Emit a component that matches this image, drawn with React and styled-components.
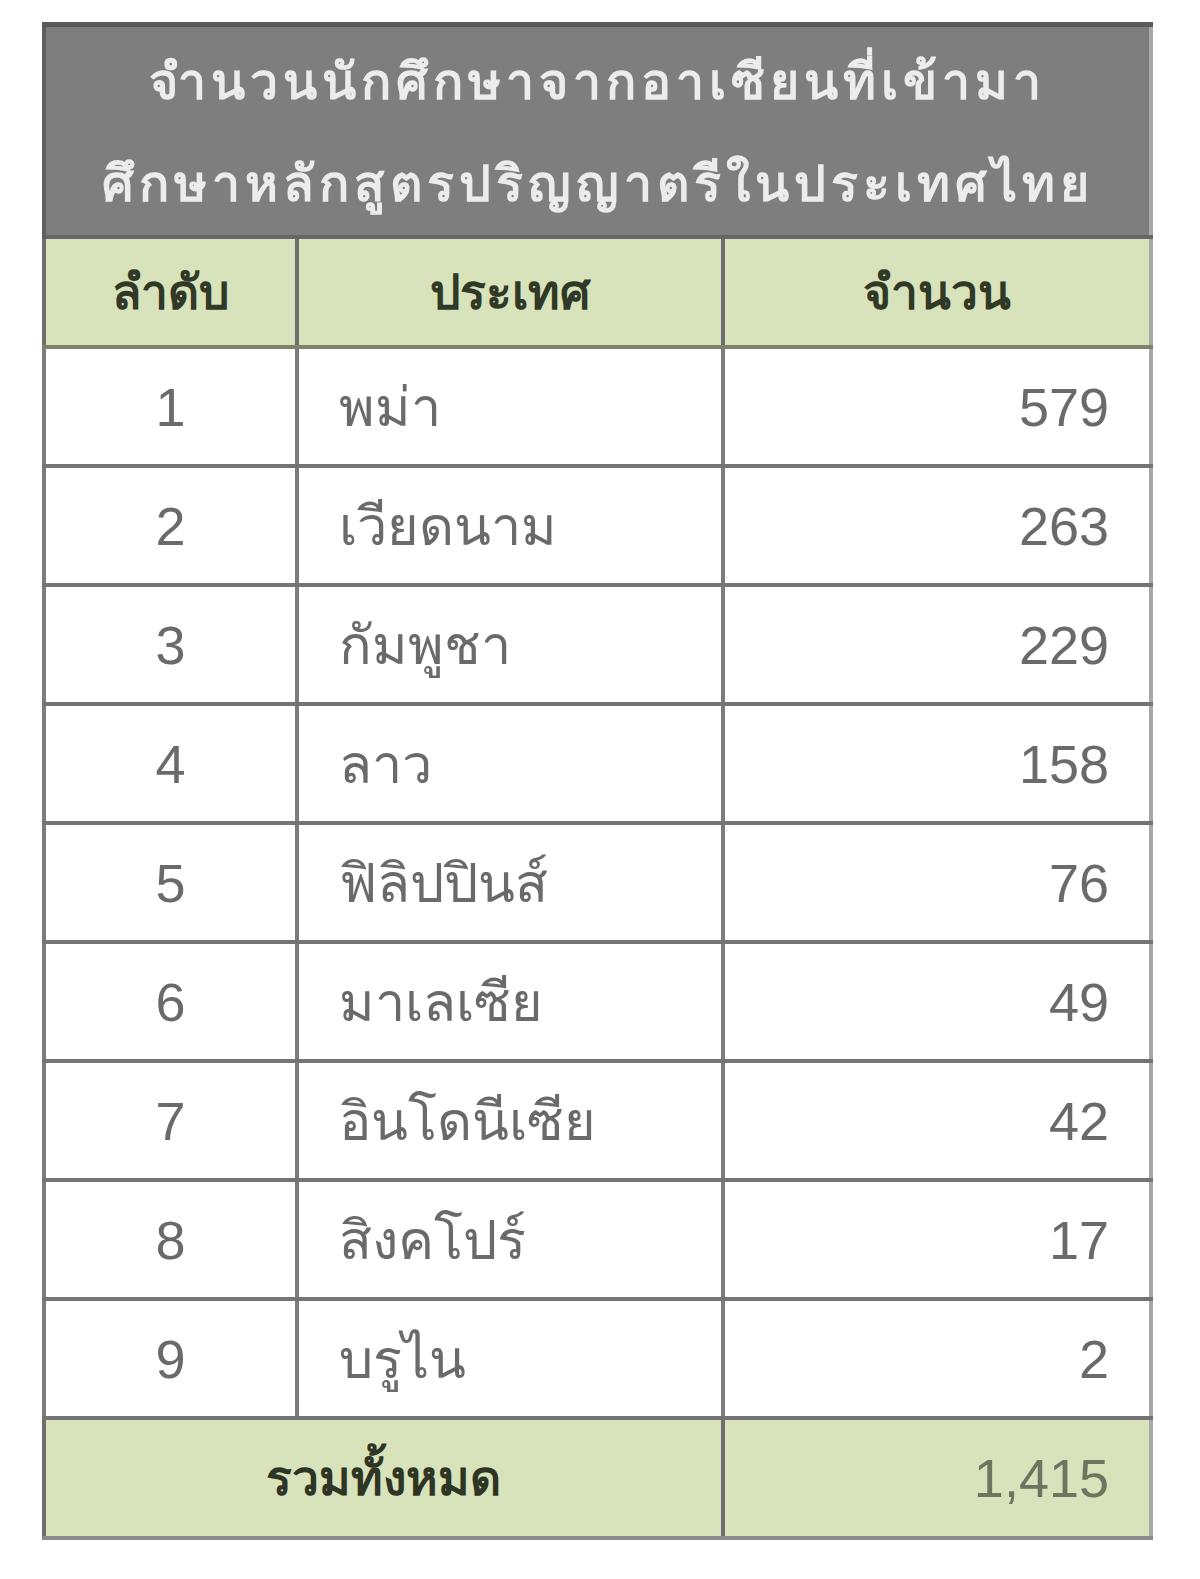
import styled, { createGlobalStyle } from "styled-components";

const GlobalStyle = createGlobalStyle`
  body {
    margin: 0;
    background: #ffffff;
    font-family: "Noto Sans", "DejaVu Sans", sans-serif;
  }
`;

const rows = [
  { no: 1, country: "พม่า", count: "579" },
  { no: 2, country: "เวียดนาม", count: "263" },
  { no: 3, country: "กัมพูชา", count: "229" },
  { no: 4, country: "ลาว", count: "158" },
  { no: 5, country: "ฟิลิปปินส์", count: "76" },
  { no: 6, country: "มาเลเซีย", count: "49" },
  { no: 7, country: "อินโดนีเซีย", count: "42" },
  { no: 8, country: "สิงคโปร์", count: "17" },
  { no: 9, country: "บรูไน", count: "2" },
];

const App = () => {
  return (
    <>
      <GlobalStyle />
      <Page>
        <Table>
          <colgroup>
            <col style={{ width: 253 }} />
            <col style={{ width: 426 }} />
            <col style={{ width: 428 }} />
          </colgroup>
          <thead>
            <tr>
              <TitleCell colSpan={3}>
                <TitleLine>จำนวนนักศึกษาจากอาเซียนที่เข้ามา</TitleLine>
                <TitleLine>ศึกษาหลักสูตรปริญญาตรีในประเทศไทย</TitleLine>
              </TitleCell>
            </tr>
            <tr>
              <HeadCell>ลำดับ</HeadCell>
              <HeadCell>ประเทศ</HeadCell>
              <HeadCell>จำนวน</HeadCell>
            </tr>
          </thead>
          <tbody>
            {rows.map((r) => (
              <tr key={r.no}>
                <Cell $align="center">{r.no}</Cell>
                <Cell $align="left">{r.country}</Cell>
                <Cell $align="right">{r.count}</Cell>
              </tr>
            ))}
          </tbody>
          <tfoot>
            <tr>
              <TotalCell colSpan={2} $bold $align="center">รวมทั้งหมด</TotalCell>
              <TotalCell $align="right">1,415</TotalCell>
            </tr>
          </tfoot>
        </Table>
      </Page>
    </>
  );
};

export default App;

const Page = styled.div`
  padding: 22px 0 0 42px;
  height: 1557px;
`;

const Table = styled.table`
  border-collapse: collapse;
  table-layout: fixed;
  width: 1110px;
  border-top: 3px solid #c4c4c4;
  border-right: 4px solid #a8a8a8;
`;

const TitleCell = styled.th`
  background: #7e7e7e;
  border-top: 5px solid #5a5a5a;
  border-left: 4px solid #5f5f5f;
  height: 208px;
  padding: 0;
  text-align: center;
  vertical-align: middle;
`;

const TitleLine = styled.div`
  color: #ececec;
  font-size: 50px;
  font-weight: 700;
  line-height: 102px;
  letter-spacing: 5px;
`;

const HeadCell = styled.th`
  background: #d8e2bb;
  height: 106px;
  padding: 0;
  border-top: 4px solid #666;
  border-bottom: 4px solid #7d8269;
  border-left: 4px solid #6e6e6e;
  color: #303826;
  font-size: 48px;
  font-weight: 700;
  text-align: center;
  vertical-align: middle;
`;

const Cell = styled.td`
  background: #ffffff;
  height: 115px;
  padding: 0 40px;
  border-bottom: 4px solid #747474;
  border-left: 4px solid #7c7c7c;
  color: #6a6a6a;
  font-family: "Liberation Sans", "Noto Sans", sans-serif;
  font-size: 54px;
  text-align: ${(p) => p.$align};
  vertical-align: middle;
`;

const TotalCell = styled.td`
  background: #d8e2bb;
  height: 116px;
  padding: 0 40px;
  border-bottom: 4px solid #8a8a8a;
  border-left: 4px solid #6e6e6e;
  color: ${(p) => (p.$bold ? "#2e3524" : "#6b7560")};
  font-family: "Liberation Sans", "Noto Sans", sans-serif;
  font-size: ${(p) => (p.$bold ? "48px" : "54px")};
  font-weight: ${(p) => (p.$bold ? 700 : 400)};
  text-align: ${(p) => p.$align};
  vertical-align: middle;
`;
